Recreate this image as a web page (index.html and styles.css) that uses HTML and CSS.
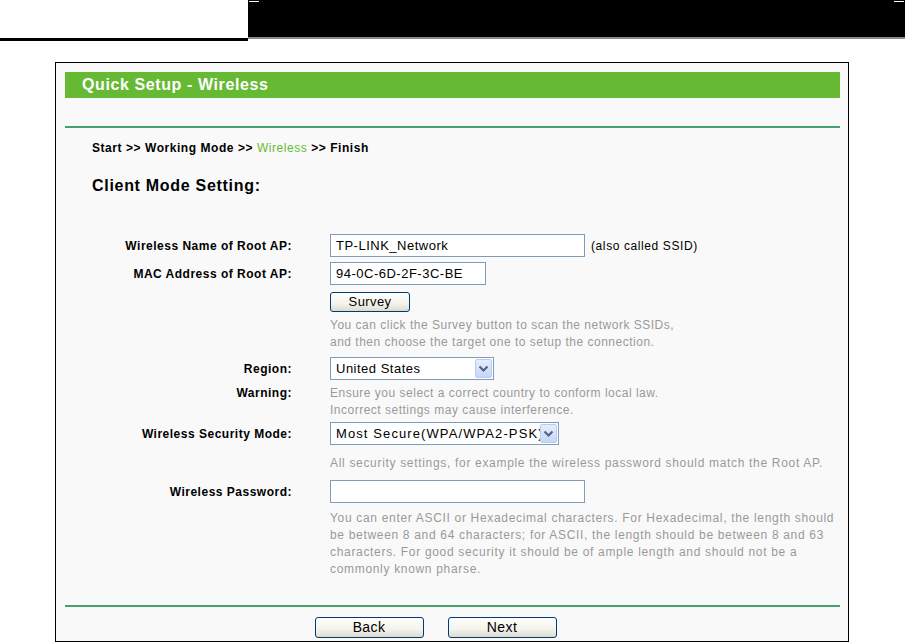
FILE: index.html
```html
<!DOCTYPE html>
<html>
<head>
<meta charset="utf-8">
<link rel="stylesheet" href="styles.css">
</head>
<body>
<div class="top">
  <div class="top-left"></div>
  <div class="top-bar"><span class="mark mark-l"></span><span class="mark mark-r"></span></div>
</div>
<div class="frame">
  <div class="title">Quick Setup - Wireless</div>
  <div class="rule rule-top"></div>
  <div class="crumb">Start &gt;&gt; Working Mode &gt;&gt; <span class="cur">Wireless</span> &gt;&gt; Finish</div>
  <div class="heading">Client Mode Setting:</div>

  <div class="row r1">
    <div class="lbl">Wireless Name of Root AP:</div>
    <div class="val"><div class="input w255">TP-LINK_Network</div><span class="note">(also called SSID)</span></div>
  </div>
  <div class="row r2">
    <div class="lbl">MAC Address of Root AP:</div>
    <div class="val"><div class="input w156">94-0C-6D-2F-3C-BE</div></div>
  </div>
  <div class="row r3">
    <div class="lbl"></div>
    <div class="val"><div class="btn survey">Survey</div></div>
  </div>
  <div class="row r4">
    <div class="lbl"></div>
    <div class="help">You can click the Survey button to scan the network SSIDs,<br>and then choose the target one to setup the connection.</div>
  </div>
  <div class="row r5">
    <div class="lbl">Region:</div>
    <div class="val"><div class="select w164"><span class="sel-text">United States</span><span class="arrow"><svg width="11" height="8" viewBox="0 0 11 8"><path d="M1.5 1.5 L5.5 5.5 L9.5 1.5" fill="none" stroke="#4d6185" stroke-width="2"/></svg></span></div></div>
  </div>
  <div class="row r6">
    <div class="lbl lbl-top">Warning:</div>
    <div class="help">Ensure you select a correct country to conform local law.<br>Incorrect settings may cause interference.</div>
  </div>
  <div class="row r7">
    <div class="lbl">Wireless Security Mode:</div>
    <div class="val"><div class="select w229"><span class="sel-text sel-wide">Most Secure(WPA/WPA2-PSK)</span><span class="arrow"><svg width="11" height="8" viewBox="0 0 11 8"><path d="M1.5 1.5 L5.5 5.5 L9.5 1.5" fill="none" stroke="#4d6185" stroke-width="2"/></svg></span></div></div>
  </div>
  <div class="row r8">
    <div class="lbl"></div>
    <div class="help long">All security settings, for example the wireless password should match the Root AP.</div>
  </div>
  <div class="row r9">
    <div class="lbl">Wireless Password:</div>
    <div class="val"><div class="input w255"></div></div>
  </div>
  <div class="row r10">
    <div class="lbl"></div>
    <div class="help long">You can enter ASCII or Hexadecimal characters. For Hexadecimal, the length should<br>be between 8 and 64 characters; for ASCII, the length should be between 8 and 63<br>characters. For good security it should be of ample length and should not be a<br>commonly known pharse.</div>
  </div>

  <div class="rule rule-bottom"></div>
  <div class="buttons">
    <div class="btn big">Back</div>
    <div class="btn big">Next</div>
  </div>
</div>
</body>
</html>
```
FILE: styles.css
```css
html, body {
  margin: 0;
  padding: 0;
  background: #ffffff;
  font-family: "Liberation Sans", Arial, sans-serif;
}
.top {
  display: flex;
  height: 41px;
}
.top-left {
  width: 248px;
  height: 38px;
  border-bottom: 3px solid #000;
}
.top-bar {
  flex: 1;
  height: 37px;
  background: #000;
  border-bottom: 2px solid #8a8a8a;
  position: relative;
}
.mark {
  position: absolute;
  top: 1px;
  height: 1px;
  width: 10px;
  background: #fff;
}
.mark-l { left: 1px; }
.mark-r { right: 1px; }
.frame {
  margin: 21px 0 0 55px;
  width: 794px;
  height: 580px;
  box-sizing: border-box;
  border: 1px solid #000;
  background: #f9f9f9;
  padding: 9px 8px 0 9px;
}
.title {
  height: 26px;
  background: #66b933;
  color: #fff;
  font-weight: bold;
  font-size: 16px;
  letter-spacing: 0.6px;
  line-height: 25px;
  padding-left: 17px;
}
.rule {
  height: 2px;
  background: #45a16e;
}
.rule-top { margin-top: 28px; }
.crumb {
  margin-top: 12px;
  padding-left: 27px;
  font-size: 12px;
  font-weight: bold;
  letter-spacing: 0.55px;
  line-height: 17px;
  color: #000;
}
.crumb .cur {
  color: #66bb33;
  font-weight: normal;
}
.heading {
  margin-top: 19px;
  padding-left: 27px;
  font-size: 16px;
  font-weight: bold;
  letter-spacing: 0.7px;
  line-height: 20px;
  color: #000;
}
.row {
  display: flex;
  align-items: center;
}
.lbl {
  width: 227px;
  flex: none;
  text-align: right;
  font-size: 12px;
  font-weight: bold;
  letter-spacing: 0.5px;
  color: #000;
  margin-right: 38px;
}
.lbl-top {
  align-self: flex-start;
  line-height: 17px;
}
.val {
  display: flex;
  align-items: center;
}
.r1 { margin-top: 38px; }
.r2 { margin-top: 5px; }
.r3 { margin-top: 7px; }
.r4 { margin-top: 5px; }
.r5 { margin-top: 6px; }
.r6 { margin-top: 5px; }
.r7 { margin-top: 3px; }
.r8 { margin-top: 10px; }
.r9 { margin-top: 8px; }
.r10 { margin-top: 7px; }
.input {
  box-sizing: border-box;
  height: 23px;
  border: 1px solid #7f9db9;
  background: #fff;
  font-size: 13px;
  letter-spacing: 0.5px;
  line-height: 21px;
  padding-left: 5px;
  color: #000;
}
.w255 { width: 255px; }
.w156 { width: 156px; }
.w164 { width: 164px; }
.w229 { width: 229px; }
.note {
  margin-left: 6px;
  font-size: 12px;
  letter-spacing: 0.6px;
  color: #000;
}
.btn {
  box-sizing: border-box;
  border: 1px solid #003c74;
  border-radius: 3px;
  background: linear-gradient(#ffffff, #f3f2ec 60%, #dedbcd);
  text-align: center;
  color: #000;
  font-size: 13px;
  letter-spacing: 0.4px;
}
.survey {
  width: 80px;
  height: 20px;
  line-height: 18px;
}
.help {
  font-size: 12px;
  letter-spacing: 0.5px;
  line-height: 17px;
  color: #999999;
  white-space: nowrap;
}
.help.long {
  letter-spacing: 0.68px;
}
.select {
  box-sizing: border-box;
  height: 23px;
  border: 1px solid #7f9db9;
  background: #fff;
  display: flex;
  align-items: center;
  padding: 1px;
}
.sel-text {
  flex: 1;
  overflow: hidden;
  white-space: nowrap;
  font-size: 13px;
  letter-spacing: 0.5px;
  line-height: 19px;
  padding-left: 4px;
  color: #000;
}
.sel-wide {
  letter-spacing: 1.1px;
}
.arrow {
  flex: none;
  width: 17px;
  height: 19px;
  box-sizing: border-box;
  border: 1px solid #b8cbf0;
  border-radius: 2px;
  background: linear-gradient(#e6eefc, #c6d6f7);
  display: flex;
  align-items: center;
  justify-content: center;
}
.rule-bottom { margin-top: 27px; }
.buttons {
  display: flex;
  justify-content: center;
  gap: 24px;
  margin-top: 10px;
  padding-right: 34px;
}
.big {
  width: 109px;
  height: 21px;
  line-height: 19px;
  font-size: 14px;
}
```
